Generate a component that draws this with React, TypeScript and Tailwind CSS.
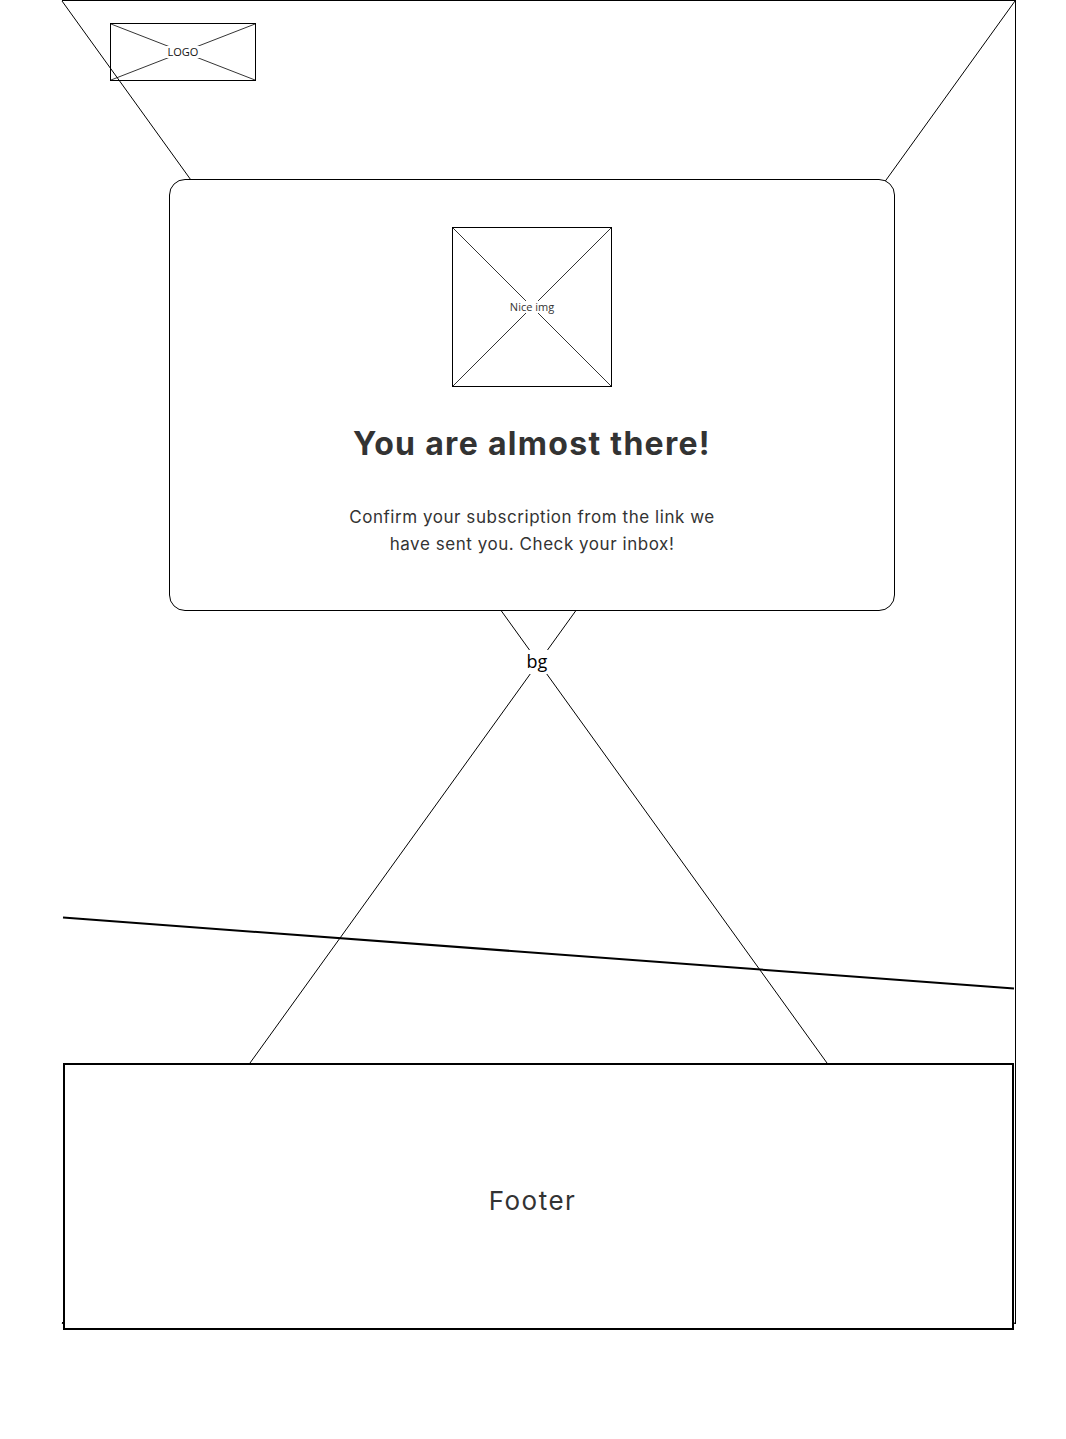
import React from "react";

function XBox({
  w,
  h,
  label,
  labelClass,
  filled,
}: {
  w: number;
  h: number;
  label: string;
  labelClass: string;
  filled?: boolean;
}) {
  return (
    <div
      className={`relative border border-black flex items-center justify-center ${filled ? "bg-white" : ""}`}
      style={{ width: w, height: h }}
    >
      <svg className="absolute inset-0 w-full h-full" viewBox={`0 0 ${w - 2} ${h - 2}`} preserveAspectRatio="none">
        <line x1="0" y1="0" x2={w - 2} y2={h - 2} stroke="#000" strokeWidth="0.8" />
        <line x1={w - 2} y1="0" x2="0" y2={h - 2} stroke="#000" strokeWidth="0.8" />
      </svg>
      <span className={`relative bg-white px-[2px] pb-[1px] leading-none ${labelClass}`}>{label}</span>
    </div>
  );
}

export default function App() {
  return (
    <div
      className="relative w-[1066px] h-[1439px] bg-white overflow-hidden"
      style={{ fontFamily: "'Open Sans', sans-serif" }}
    >
      {/* background placeholder drawing */}
      <svg className="absolute left-0 top-0" width="1066" height="1439" viewBox="0 0 1066 1439">
        <line x1="62" y1="0.5" x2="1015" y2="0.5" stroke="#000" strokeWidth="1" />
        <line x1="1015.5" y1="0" x2="1015.5" y2="1324" stroke="#000" strokeWidth="1" />
        <line x1="62" y1="1322.5" x2="64" y2="1322.5" stroke="#000" strokeWidth="1" />
        <line x1="62" y1="1" x2="1015" y2="1324" stroke="#000" strokeWidth="1" />
        <line x1="1015" y1="1" x2="62" y2="1324" stroke="#000" strokeWidth="1" />
        <line x1="63" y1="917.5" x2="1014" y2="988.5" stroke="#000" strokeWidth="2" />
        <rect x="524" y="650" width="26" height="24" fill="#fff" />
        <text x="537" y="668" textAnchor="middle" fontSize="18" fontFamily="'Open Sans', sans-serif" fill="#000">
          bg
        </text>
      </svg>

      <div className="relative flex flex-col">
        <div className="pl-[110px] pt-[23px]">
          <XBox w={146} h={58} label="LOGO" labelClass="text-[11px] text-[#111]" />
        </div>

        <div className="ml-[169px] mt-[98px] w-[726px] h-[432px] rounded-[16px] border border-black bg-white flex flex-col items-center pt-[47px]">
          <XBox w={160} h={160} label="Nice img" labelClass="text-[11px] text-[#333]" filled />
          <h1
            className="mt-[37px] text-[32px] leading-[40px] font-bold text-[#333] tracking-[1.3px]"
            style={{ fontFamily: "Inter, sans-serif" }}
          >
            You are almost there!
          </h1>
          <p
            className="mt-[40px] w-[400px] text-center text-[17px] leading-[27px] text-[#333] tracking-[0.55px]"
            style={{ fontFamily: "Inter, sans-serif" }}
          >
            Confirm your subscription from the link we have sent you. Check your inbox!
          </p>
        </div>

        <div className="ml-[63px] mt-[452px] w-[951px] h-[267px] border-2 border-black bg-white flex items-center justify-center pr-[12px] pt-[8px]">
          <span className="text-[26px] text-[#333] tracking-[1.5px]" style={{ fontFamily: "Inter, sans-serif" }}>
            Footer
          </span>
        </div>
      </div>
    </div>
  );
}
